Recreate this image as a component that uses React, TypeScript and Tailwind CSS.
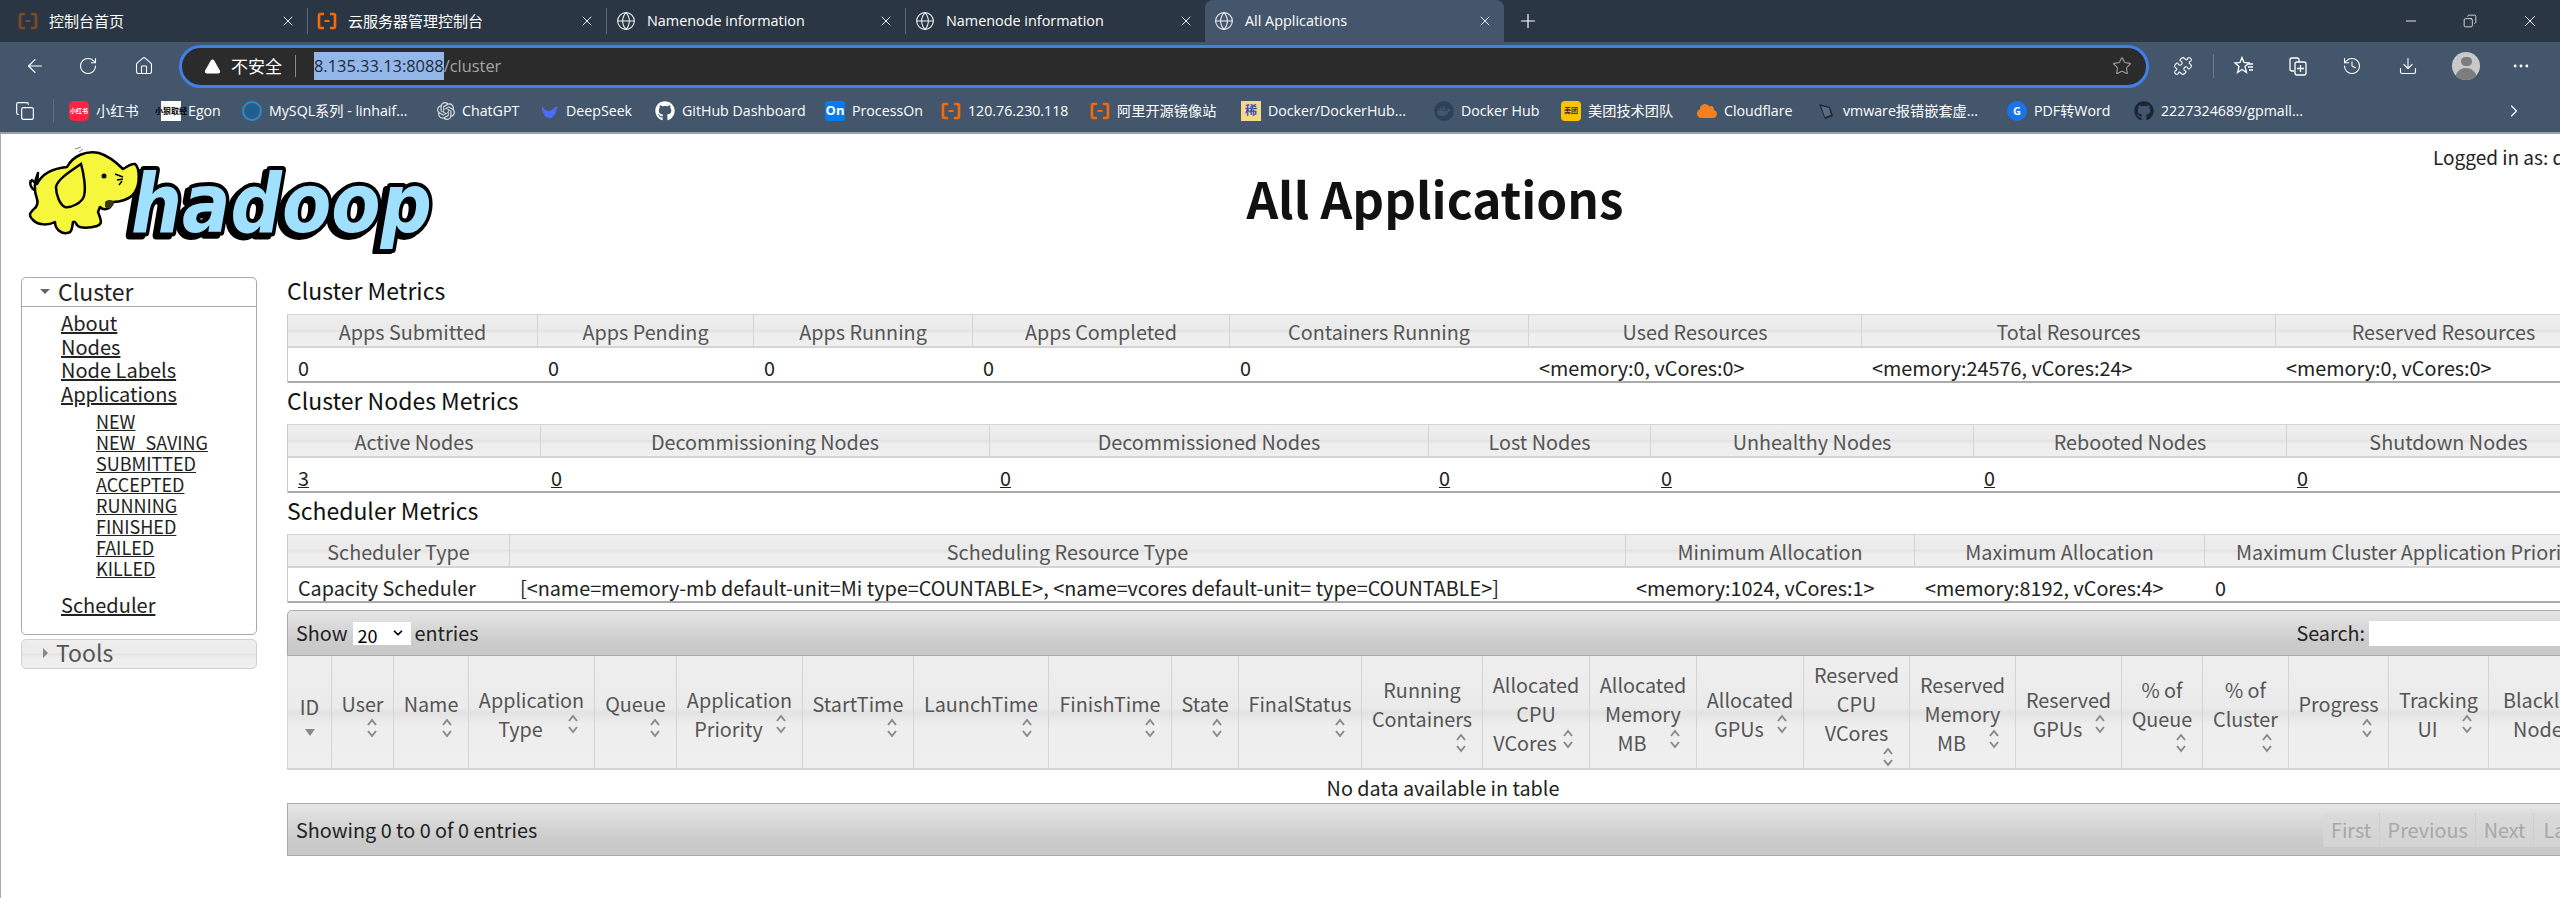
import { ArrowLeft, RotateCw, Home, Star, Puzzle, History, Download, Globe, X, Plus, ChevronRight, ChevronDown, Minus, Ellipsis, Copy, TriangleAlert } from 'lucide-react'
import { FaGithub, FaDocker, FaCloud } from 'react-icons/fa'
import { SiOpenai } from 'react-icons/si'

const tabs = [
  { title: '控制台首页', icon: 'dim', size: 'text-[15px]' },
  { title: '云服务器管理控制台', icon: 'ali', size: 'text-[15px]' },
  { title: 'Namenode information', icon: 'globe', size: 'text-[14.4px]' },
  { title: 'Namenode information', icon: 'globe', size: 'text-[14.4px]' },
  { title: 'All Applications', icon: 'globe', size: 'text-[14.4px]', active: true },
]

function AliIcon({ className }: { className: string }) {
  return (
    <svg viewBox="0 0 20 20" className={className} fill="none" stroke="currentColor">
      <path d="M7 3H3.500Q2 3 2 4.500v11Q2 17 3.500 17H7M13 3h3.500Q18 3 18 4.500v11q0 1.500-1.500 1.500H13" strokeWidth="2.600" />
      <path d="M7.500 10h5" strokeWidth="2" />
    </svg>
  )
}

const bookmarks = [
  { label: '小红书', w: 'w-[92px]', icon: <span className="flex h-5 w-5 items-center justify-center rounded-[5px] bg-[#ff2442] text-[6px] leading-none font-bold text-white">小红书</span> },
  { label: 'Egon', w: 'w-[81px]', icon: <span className="flex h-5 w-5 flex-wrap items-center justify-center bg-white text-[8px] leading-[9px] font-bold text-black">小狼取经</span> },
  { label: 'MySQL系列 - linhaif...', w: 'w-[195px]', icon: <span className="flex h-5 w-5 items-center justify-center rounded-full border-2 border-[#1c8fd6]"><span className="h-3 w-3 rounded-full bg-[#1a5f96]" /></span> },
  { label: 'ChatGPT', w: 'w-[104px]', icon: <SiOpenai className="h-[18px] w-[18px] text-[#d8dde3]" /> },
  { label: 'DeepSeek', w: 'w-[114px]', icon: <svg viewBox="0 0 20 20" className="h-[18px] w-[18px]" fill="#4d6bfe"><path d="M1 4c2 4 4 6 8 6 3 0 4-3 8-5 1 0 2 0 2 1-1 1-2 1-2 3 0 5-4 9-8 9-5 0-8-7-8-14Z" /></svg> },
  { label: 'GitHub Dashboard', w: 'w-[170px]', icon: <FaGithub className="h-5 w-5 text-white" /> },
  { label: 'ProcessOn', w: 'w-[116px]', icon: <span className="flex h-5 w-5 items-center justify-center rounded-[3px] bg-[#067bef] text-[13px] leading-none font-bold text-white">On</span> },
  { label: '120.76.230.118', w: 'w-[149px]', icon: <AliIcon className="h-5 w-5 text-[#ff6a00]" /> },
  { label: '阿里开源镜像站', w: 'w-[151px]', icon: <AliIcon className="h-5 w-5 text-[#ff6a00]" /> },
  { label: 'Docker/DockerHub...', w: 'w-[193px]', icon: <span className="flex h-5 w-5 items-center justify-center bg-[#f5d98b] text-[12px] leading-none font-bold text-[#3d4fb5]">稀</span> },
  { label: 'Docker Hub', w: 'w-[127px]', icon: <span className="flex h-5 w-5 items-center justify-center rounded-full bg-[#2c4258]"><FaDocker className="h-3.5 w-3.5 text-[#44566c]" /></span> },
  { label: '美团技术团队', w: 'w-[136px]', icon: <span className="flex h-5 w-5 items-center justify-center rounded-[4px] bg-[#ffc300] text-[7px] leading-none font-bold text-[#333]">美团</span> },
  { label: 'Cloudflare', w: 'w-[119px]', icon: <FaCloud className="h-5 w-5 text-[#f48120]" /> },
  { label: 'vmware报错嵌套虚...', w: 'w-[191px]', icon: <svg viewBox="0 0 20 20" className="h-5 w-5"><path d="M3 3l11 3 3 9-8 3Z" fill="#1c2530" /><path d="M5 5l8 2 2 7-6 2Z" fill="#5b6b7c" /></svg> },
  { label: 'PDF转Word', w: 'w-[127px]', icon: <span className="flex h-5 w-5 items-center justify-center rounded-full bg-[#1a73e8] text-[11px] leading-none font-bold text-white">G</span> },
  { label: '2227324689/gpmall...', w: 'w-[200px]', icon: <FaGithub className="h-5 w-5 text-[#1c2530]" /> },
]

const clusterCols = [
  { t: 'Apps Submitted', v: '0', w: 'w-[250px]' },
  { t: 'Apps Pending', v: '0', w: 'w-[216px]' },
  { t: 'Apps Running', v: '0', w: 'w-[219px]' },
  { t: 'Apps Completed', v: '0', w: 'w-[257px]' },
  { t: 'Containers Running', v: '0', w: 'w-[299px]' },
  { t: 'Used Resources', v: '<memory:0, vCores:0>', w: 'w-[333px]' },
  { t: 'Total Resources', v: '<memory:24576, vCores:24>', w: 'w-[414px]' },
  { t: 'Reserved Resources', v: '<memory:0, vCores:0>', w: 'w-[336px]' },
]

const nodeCols = [
  { t: 'Active Nodes', v: '3', w: 'w-[253px]', link: true },
  { t: 'Decommissioning Nodes', v: '0', w: 'w-[449px]', link: true },
  { t: 'Decommissioned Nodes', v: '0', w: 'w-[439px]', link: true },
  { t: 'Lost Nodes', v: '0', w: 'w-[222px]', link: true },
  { t: 'Unhealthy Nodes', v: '0', w: 'w-[323px]', link: true },
  { t: 'Rebooted Nodes', v: '0', w: 'w-[313px]', link: true },
  { t: 'Shutdown Nodes', v: '0', w: 'w-[324px]', link: true },
]

const schedCols = [
  { t: 'Scheduler Type', v: 'Capacity Scheduler', w: 'w-[222px]' },
  { t: 'Scheduling Resource Type', v: '[<name=memory-mb default-unit=Mi type=COUNTABLE>, <name=vcores default-unit= type=COUNTABLE>]', w: 'w-[1116px]' },
  { t: 'Minimum Allocation', v: '<memory:1024, vCores:1>', w: 'w-[289px]' },
  { t: 'Maximum Allocation', v: '<memory:8192, vCores:4>', w: 'w-[290px]' },
  { t: 'Maximum Cluster Application Priority', v: '0', w: 'w-[406px]' },
]

// inline = the sort arrows sit beside the last line, otherwise on a line of their own
const appCols = [
  { lines: ['ID'], w: 'w-[44px]', sort: 'desc' },
  { lines: ['User'], w: 'w-[62px]' },
  { lines: ['Name'], w: 'w-[75px]' },
  { lines: ['Application', 'Type'], w: 'w-[126px]', inline: true },
  { lines: ['Queue'], w: 'w-[82px]' },
  { lines: ['Application', 'Priority'], w: 'w-[126px]', inline: true },
  { lines: ['StartTime'], w: 'w-[111px]' },
  { lines: ['LaunchTime'], w: 'w-[135px]' },
  { lines: ['FinishTime'], w: 'w-[123px]' },
  { lines: ['State'], w: 'w-[67px]' },
  { lines: ['FinalStatus'], w: 'w-[123px]' },
  { lines: ['Running', 'Containers'], w: 'w-[121px]' },
  { lines: ['Allocated', 'CPU', 'VCores'], w: 'w-[107px]', inline: true },
  { lines: ['Allocated', 'Memory', 'MB'], w: 'w-[107px]', inline: true },
  { lines: ['Allocated', 'GPUs'], w: 'w-[107px]', inline: true },
  { lines: ['Reserved', 'CPU', 'VCores'], w: 'w-[106px]' },
  { lines: ['Reserved', 'Memory', 'MB'], w: 'w-[106px]', inline: true },
  { lines: ['Reserved', 'GPUs'], w: 'w-[106px]', inline: true },
  { lines: ['% of', 'Queue'], w: 'w-[81px]' },
  { lines: ['% of', 'Cluster'], w: 'w-[86px]' },
  { lines: ['Progress'], w: 'w-[100px]' },
  { lines: ['Tracking', 'UI'], w: 'w-[100px]', inline: true },
  { lines: ['Blacklisted', 'Nodes'], w: 'w-[130px]', inline: true },
]

const navLinks = ['NEW', 'NEW_SAVING', 'SUBMITTED', 'ACCEPTED', 'RUNNING', 'FINISHED', 'FAILED', 'KILLED']

const thBg = 'bg-[linear-gradient(#eeeeee_0%,#ebebeb_46%,#e3e3e3_50%,#eeeeee_62%,#efefef_100%)]'

function Logo() {
  return (
    <svg width="450" height="120" viewBox="0 0 450 120" className="block">
      <text
        x="130"
        y="98"
        textLength="301"
        lengthAdjust="spacingAndGlyphs"
        fontFamily="'DejaVu Sans', sans-serif"
        fontWeight="bold"
        fontStyle="oblique"
        fontSize="82"
        fill="#9fdfff"
        stroke="#000"
        strokeWidth="8"
        strokeLinejoin="round"
        paintOrder="stroke"
        className="drop-shadow-[-4px_3px_0_#000]"
      >
        hadoop
      </text>
      <path d="M30 46c3 0 4 4 6 5M30 46c-2 5 1 10 6 11" fill="none" stroke="#000" strokeWidth="2.500" />
      <path
        d="M36 50C42 38 55 34 66 33 72 22 85 16 98 19c10 3 18 10 24 16 4-2 8-6 12-5 5 4 5 20 0 28-5 8-16 10-22 10-2 6-8 10-13 5l-2 5c3 8 5 12-1 14-6 2-17 3-20-1-2-3-2-4-4-3-1 6-1 11-6 11-6 1-12-4-12-11-6 3-16 4-22-2-6-6-2-8 3-13 2-3 2-5 1-8-3-8-3-17 1-26Z"
        fill="#f6f63c"
        stroke="#000"
        strokeWidth="2.500"
        strokeLinejoin="round"
      />
      <path d="M80 30C68 38 56 46 55 53c0 8 4 18 9 20 6 1 17-4 19-11 2-7 0-22-3-32Z" fill="#f6f63c" stroke="#000" strokeWidth="2.500" />
      <circle cx="103" cy="42" r="2.500" fill="#000" />
      <path d="M114 40l8 3M116 46l6-1M118 51l3-4" stroke="#000" strokeWidth="1.500" fill="none" />
      <path d="M104 68c3-3 8-2 9 0-1 5-6 8-9 5Z" fill="#3a3a10" />
      <path d="M74 15l6-2M78 18l4-3" stroke="#888" strokeWidth="1" />
    </svg>
  )
}

function SortIcon({ className }: { className?: string }) {
  return (
    <svg viewBox="0 0 12 24" className={`inline-block h-[24px] w-[12px] shrink-0 ${className ?? ''}`} fill="none" stroke="#8a8a8a" strokeWidth="2">
      <path d="M2 9l4-5 4 5M2 15l4 5 4-5" />
    </svg>
  )
}

function FavoritesIcon() {
  return (
    <svg viewBox="0 0 22 22" className="ml-[19px] h-[22px] w-[22px]" fill="none" stroke="currentColor" strokeWidth="1.300">
      <path d="M9 2.500l2 5 5 .5-4 3.500 1.500 6-4.500-3-4.500 3 1.500-6L2 8l5-.5ZM15 12h5M16 15h4M15 9h5" />
    </svg>
  )
}

function CollectionsIcon() {
  return (
    <svg viewBox="0 0 22 22" className="ml-[32px] h-[22px] w-[22px]" fill="none" stroke="currentColor" strokeWidth="1.300">
      <path d="M7 16H5q-2 0-2-2V5q0-2 2-2h5q2 0 2 2v2" />
      <rect x="8" y="7" width="11" height="13" rx="2" />
      <path d="M13.500 10v7M10 13.500h7" />
    </svg>
  )
}

function MetricTable({ cols }: { cols: { t: string; v: string; w: string; link?: boolean }[] }) {
  return (
    <div className="w-max border-l border-[#cccccc]">
      <div className={`flex h-[34px] border-t border-b-2 border-[#d4d4d4] ${thBg}`}>
        {cols.map((c) => (
          <div key={c.t} className={`${c.w} flex shrink-0 items-center justify-center border-r border-[#d4d4d4] pt-[3px] text-[#555555] whitespace-nowrap`}>
            {c.t}
          </div>
        ))}
      </div>
      <div className="flex h-[35px] border-b-2 border-[#aaaaaa]">
        {cols.map((c) => (
          <div key={c.t} className={`${c.w} flex shrink-0 items-center px-[10px] pt-[6px] whitespace-nowrap`}>
            {c.link ? <a className="underline">{c.v}</a> : c.v}
          </div>
        ))}
      </div>
    </div>
  )
}

function Heading({ children }: { children: string }) {
  return <h3 className="flex h-[41px] items-center pb-[6px] text-[23px] leading-none text-[#111111]">{children}</h3>
}

export default function App() {
  return (
    <div className="h-[898px] w-[2560px] overflow-hidden bg-white font-['Noto_Sans_CJK_SC','Noto_Sans',sans-serif] text-[19.8px] text-[#222222]">
      {/* browser chrome */}
      <div className="font-['Open_Sans','Noto_Sans_CJK_SC',sans-serif] text-white">
        <div className="flex h-[42px] items-center bg-[#2b3644] pl-[9px]">
          {tabs.map((tab, i) => (
            <div
              key={i}
              className={`relative flex h-[42px] w-[299px] shrink-0 items-center pl-[9px] ${tab.size} ${tab.active ? 'rounded-t-[8px] bg-[#44566c]' : ''}`}
            >
              {tab.icon === 'globe' && <Globe className="h-[20px] w-[20px] text-[#eef1f4]" strokeWidth={1.300} />}
              {tab.icon === 'ali' && <AliIcon className="h-[20px] w-[20px] text-[#ff6a00]" />}
              {tab.icon === 'dim' && <AliIcon className="h-[20px] w-[20px] text-[#7d4a22]" />}
              <span className="ml-[11px] flex-1 whitespace-nowrap">{tab.title}</span>
              <X className="mr-[11px] h-[16px] w-[16px] text-[#e8ebee]" strokeWidth={1.500} />
              {i < 3 && <span className="h-[26px] w-px bg-[#5a6878]" />}
            </div>
          ))}
          <Plus className="ml-[13px] h-[22px] w-[22px] text-white" strokeWidth={1.300} />
          <div className="ml-auto flex items-center gap-[44px] pr-[21px]">
            <Minus className="h-[16px] w-[16px]" strokeWidth={1.300} />
            <Copy className="h-[14px] w-[14px] -scale-x-100" strokeWidth={1.300} />
            <X className="h-[18px] w-[18px]" strokeWidth={1.200} />
          </div>
        </div>

        <div className="flex h-[48px] items-center bg-[#44566c] pl-[24px]">
          <ArrowLeft className="h-[22px] w-[22px]" strokeWidth={1.300} />
          <RotateCw className="ml-[32px] h-[20px] w-[20px]" strokeWidth={1.300} />
          <Home className="ml-[36px] h-[20px] w-[20px]" strokeWidth={1.300} />
          <div className="ml-[25px] flex h-[43px] w-[1970px] items-center rounded-full border-[3px] border-[#3f7fe6] bg-[#2b2b2b] pl-[22px]">
            <TriangleAlert className="h-[17px] w-[17px] fill-white text-white" strokeWidth={1.500} />
            <span className="ml-[10px] font-['Noto_Sans_CJK_SC',sans-serif] text-[17px]">不安全</span>
            <span className="ml-[13px] h-[22px] w-px bg-[#8a8a8a]" />
            <span className="ml-[18px] flex h-[28px] items-center bg-[#93b7e8] text-[16.4px] text-[#1d2a3a]">8.135.33.13:8088</span>
            <span className="text-[16.4px] text-[#a5a5a5]">/cluster</span>
            <Star className="mr-[14px] ml-auto h-[20px] w-[20px] text-[#a0a0a0]" strokeWidth={1.300} />
          </div>
          <Puzzle className="ml-[24px] h-[20px] w-[20px]" strokeWidth={1.300} />
          <span className="ml-[20px] h-[24px] w-px bg-[#6c7b8c]" />
          <FavoritesIcon />
          <CollectionsIcon />
          <History className="ml-[33px] h-[20px] w-[20px]" strokeWidth={1.300} />
          <Download className="ml-[36px] h-[20px] w-[20px]" strokeWidth={1.300} />
          <span className="ml-[34px] flex h-[28px] w-[28px] flex-col items-center overflow-hidden rounded-full bg-[#c9c9c9]">
            <span className="mt-[5px] h-[11px] w-[11px] rounded-full bg-[#7d7d7d]" />
            <span className="mt-[2px] h-[14px] w-[22px] rounded-t-full bg-[#7d7d7d]" />
          </span>
          <Ellipsis className="ml-[31px] h-[20px] w-[20px]" strokeWidth={1.500} />
        </div>

        <div className="flex h-[42px] items-center bg-[#44566c] pl-[15px] text-[14.2px]">
          <Copy className="h-[20px] w-[20px]" strokeWidth={1.400} />
          <span className="mr-[15px] ml-[18px] h-[24px] w-px bg-[#5d6d80]" />
          {bookmarks.map((b) => (
            <div key={b.label} className={`${b.w} flex shrink-0 items-center gap-[7px] whitespace-nowrap`}>
              {b.icon}
              <span>{b.label}</span>
            </div>
          ))}
          <ChevronRight className="ml-auto mr-[36px] h-[20px] w-[20px]" strokeWidth={1.300} />
        </div>
        <div className="h-[2px] bg-[#9aa0a6]" />
      </div>

      {/* page */}
      <div className="h-[764px] border-l border-[#aaaaaa]">
        <div className="flex h-[141px]">
          <div className="w-[449px] shrink-0">
            <Logo />
          </div>
          <h1 className="flex h-[127px] w-[1970px] shrink-0 items-center justify-center text-[49.5px] leading-none font-bold text-[#111111]">All Applications</h1>
          <span className="mt-[9px] ml-[13px] text-[19px] whitespace-nowrap">Logged in as: dr.who</span>
        </div>

        <div className="flex">
          {/* sidebar */}
          <div className="ml-[20px] w-[236px] shrink-0 pt-[2px]">
            <div className="h-[358px] rounded-[5px] border border-[#aaaaaa]">
              <div className="flex h-[29px] items-center border-b border-[#aaaaaa] pb-[2px] pl-[18px] text-[23px] text-[#222222]">
                <span className="h-0 w-0 border-x-[5px] border-t-[5px] border-x-transparent border-t-[#666666]" />
                <span className="ml-[8px]">Cluster</span>
              </div>
              <div className="pt-[4px] pl-[39px] text-[20px] leading-[23.5px] underline">
                <div>About</div>
                <div>Nodes</div>
                <div>Node Labels</div>
                <div>Applications</div>
                <div className="mt-[6px] ml-[35px] text-[18px] leading-[21px]">
                  {navLinks.map((l) => (
                    <div key={l}>{l}</div>
                  ))}
                </div>
                <div className="mt-[14px]">Scheduler</div>
              </div>
            </div>
            <div className={`mt-[4px] flex h-[30px] items-center rounded-[5px] border border-[#d0d0d0] pb-[3px] pl-[21px] text-[23px] text-[#555555] ${thBg}`}>
              <span className="h-0 w-0 border-y-[5px] border-l-[5px] border-y-transparent border-l-[#888888]" />
              <span className="ml-[8px]">Tools</span>
            </div>
          </div>

          {/* main */}
          <div className="ml-[30px] -mt-[2px] min-w-0">
            <Heading>Cluster Metrics</Heading>
            <MetricTable cols={clusterCols} />
            <Heading>Cluster Nodes Metrics</Heading>
            <MetricTable cols={nodeCols} />
            <Heading>Scheduler Metrics</Heading>
            <MetricTable cols={schedCols} />

            <div className="mt-[7px] w-max">
              <div className="flex h-[46px] w-[2323px] items-center rounded-tl-[5px] border border-[#aaaaaa] bg-[linear-gradient(#e6e6e6_0%,#cbcbcb_70%,#c8c8c8_100%)] pl-[8px] text-[#222222]">
                <span>Show</span>
                <select className="ml-[5px] h-[23px] w-[58px] appearance-none bg-white pl-[5px] text-[18px] text-black" defaultValue="20">
                  <option>20</option>
                </select>
                <ChevronDown className="pointer-events-none -ml-[20px] mr-[10px] h-[14px] w-[14px] text-black" strokeWidth={3} />
                <span>entries</span>
                <span className="ml-[1818px]">Search:</span>
                <input className="ml-[4px] h-[25px] w-[200px] bg-white" />
              </div>
              <div className={`flex h-[114px] border-b-2 border-l border-[#d4d4d4] ${thBg}`}>
                {appCols.map((c, i) => (
                  <div key={i} className={`${c.w} flex shrink-0 flex-col items-center justify-center border-r border-[#d4d4d4] pt-[3px] text-center text-[#555555]`}>
                    {c.lines.map((line, j) =>
                      c.inline && j === c.lines.length - 1 ? (
                        <div key={j} className="flex h-[29px] w-full items-center leading-[29px] whitespace-nowrap">
                          <span className="flex-1 text-center">{line}</span>
                          <SortIcon className="relative -top-[4px] mr-[15px] -ml-[5px]" />
                        </div>
                      ) : (
                        <div key={j} className="leading-[29px] whitespace-nowrap">
                          {line}
                        </div>
                      ),
                    )}
                    {c.sort === 'desc' && <span className="mt-[8px] h-0 w-0 border-x-[5px] border-t-[7px] border-x-transparent border-t-[#8a8a8a]" />}
                    {!c.inline && !c.sort && (
                      <div className="flex h-[20px] w-full items-center justify-end pr-[15px]">
                        <SortIcon />
                      </div>
                    )}
                  </div>
                ))}
              </div>
              <div className="flex h-[33px] w-[2323px] items-center justify-center pt-[2px] pr-[8px] text-[#222222]">
                <span className="ml-[-3px]">No data available in table</span>
              </div>
              <div className="flex h-[53px] w-[2323px] items-center border border-[#aaaaaa] bg-[linear-gradient(#e6e6e6_0%,#cbcbcb_70%,#c8c8c8_100%)] pl-[8px]">
                <span>Showing 0 to 0 of 0 entries</span>
                <div className="ml-[1786px] flex h-[34px] items-center rounded-l-[4px] bg-[#d8d8d8]/70 text-[#a8a8a8]">
                  <span className="flex h-full w-[57px] items-center justify-center border-r border-[#cfcfcf]">First</span>
                  <span className="flex h-full w-[96px] items-center justify-center border-r border-[#cfcfcf]">Previous</span>
                  <span className="flex h-full w-[58px] items-center justify-center border-r border-[#cfcfcf]">Next</span>
                  <span className="flex h-full w-[57px] items-center justify-center">Last</span>
                </div>
              </div>
            </div>
          </div>
        </div>
      </div>
    </div>
  )
}
